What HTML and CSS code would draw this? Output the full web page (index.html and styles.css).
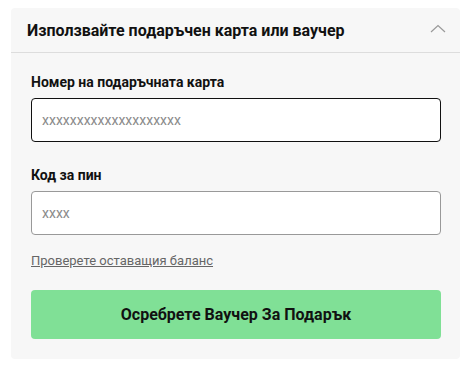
FILE: index.html
```html
<!DOCTYPE html>
<html lang="bg">
<head>
  <meta charset="UTF-8" />
  <title>Подаръчна карта</title>
  <link rel="stylesheet" href="styles.css">
</head>
<body>
  <div class="voucher-card">
    <div class="voucher-head">
      <h2>Използвайте подаръчен карта или ваучер</h2>
      <svg class="chevron" width="16" height="9" viewBox="0 0 16 9">
        <polyline points="1,8 8,1.5 15,8" fill="none" stroke="#9a9a9a" stroke-width="1.2" />
      </svg>
    </div>
    <div class="voucher-body">
      <label class="field-label" for="cardNo">Номер на подаръчната карта</label>
      <input class="field-input is-focused" id="cardNo" type="text" placeholder="xxxxxxxxxxxxxxxxxxxx">

      <label class="field-label" for="pin">Код за пин</label>
      <input class="field-input" id="pin" type="text" placeholder="xxxx">

      <a class="balance-link" href="#">Проверете оставащия баланс</a>

      <button class="redeem-btn">Осребрете Ваучер За Подарък</button>
    </div>
  </div>
</body>
</html>
```

FILE: styles.css
```css
body {
  margin: 0;
  padding: 8px 3px 0 11px;
  background: #fff;
  font-family: Roboto, "Liberation Sans", sans-serif;
  color: #111;
}
.voucher-card {
  background: #f7f7f7;
  border-radius: 4px;
  width: 449px;
}
.voucher-head {
  height: 44px;
  display: flex;
  align-items: center;
  justify-content: space-between;
  padding: 0 14px 0 16px;
  border-bottom: 1px solid #dddddd;
}
.voucher-head h2 {
  margin: 0;
  font-size: 16px;
  font-weight: 700;
  color: #111;
}
.chevron {
  display: block;
  margin-top: -3px;
}
.voucher-body {
  display: flex;
  flex-direction: column;
  padding: 21px 19px 20px 20px;
}
.field-label {
  font-size: 14px;
  font-weight: 700;
  line-height: 16px;
  margin-bottom: 8px;
}
.field-input {
  box-sizing: border-box;
  height: 44px;
  width: 100%;
  border: 1px solid #999;
  border-radius: 4px;
  background: #fff;
  padding: 0 10px;
  font-family: Roboto, "Liberation Sans", sans-serif;
  font-size: 14px;
  color: #111;
  outline: none;
  margin-bottom: 25px;
}
.field-input.is-focused {
  border-color: #111;
}
.field-input::placeholder {
  color: #8a8a8a;
}
#pin {
  margin-bottom: 18px;
}
.balance-link {
  align-self: flex-start;
  font-size: 13px;
  line-height: 16px;
  color: #666;
  text-decoration: underline;
  margin-bottom: 21px;
}
.redeem-btn {
  height: 49px;
  border: none;
  border-radius: 4px;
  background: #80e096;
  font-family: Roboto, "Liberation Sans", sans-serif;
  font-size: 16px;
  font-weight: 700;
  color: #111;
  cursor: pointer;
}
```
